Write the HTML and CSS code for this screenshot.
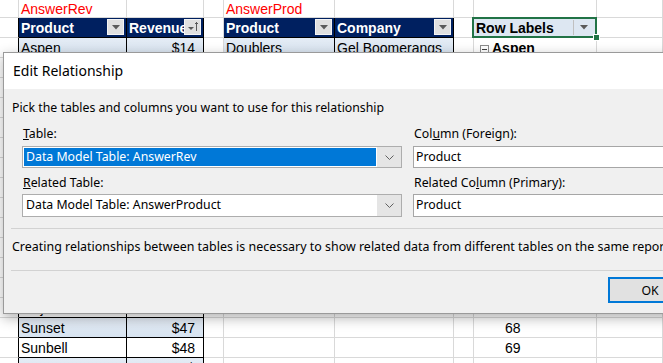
FILE: index.html
```html
<!DOCTYPE html>
<html lang="en">
<head>
    <meta charset="UTF-8">
    <meta name="viewport" content="width=device-width, initial-scale=1.0">
    <title>Edit Relationship</title>
    <link rel="stylesheet" href="styles.css">
</head>
<body>
    <!-- worksheet behind the dialog -->
    <div class="sheet">
        <div class="row title">
            <div class="cell a"></div>
            <div class="cell b red">AnswerRev</div>
            <div class="cell c"></div>
            <div class="cell d"></div>
            <div class="cell e red">AnswerProd</div>
            <div class="cell f"></div>
            <div class="cell g"></div>
            <div class="cell h"></div>
            <div class="cell i"></div>
        </div>
        <div class="row">
            <div class="cell a tbl-edge"></div>
            <div class="cell b head">Product<span class="filter"><svg width="8" height="5"><path d="M0 0 L8 0 L4 4.5 Z" fill="#5a5a5a"/></svg></span></div>
            <div class="cell c head">Revenue<span class="filter"><svg width="12" height="12"><path d="M1 6 L7 6 L4 9 Z" fill="#5a5a5a"/><path d="M9.5 1 V10 M8 2.5 H11" stroke="#5a5a5a" stroke-width="1"/></svg></span></div>
            <div class="cell d"></div>
            <div class="cell e head">Product<span class="filter"><svg width="8" height="5"><path d="M0 0 L8 0 L4 4.5 Z" fill="#5a5a5a"/></svg></span></div>
            <div class="cell f head">Company<span class="filter"><svg width="8" height="5"><path d="M0 0 L8 0 L4 4.5 Z" fill="#5a5a5a"/></svg></span></div>
            <div class="cell g"></div>
            <div class="cell h pivot-head">Row Labels<span class="pivot-filter"><svg width="8" height="5"><path d="M0 0 L8 0 L4 4.5 Z" fill="#5a5a5a"/></svg></span></div>
            <div class="cell i"></div>
        </div>
        <div class="row band">
            <div class="cell a tbl-edge"></div>
            <div class="cell b tbl">Aspen</div>
            <div class="cell c tbl num">$14</div>
            <div class="cell d"></div>
            <div class="cell e tbl">Doublers</div>
            <div class="cell f tbl">Gel Boomerangs</div>
            <div class="cell g"></div>
            <div class="cell h plain bold"><span class="collapse"></span>Aspen</div>
            <div class="cell i"></div>
        </div>
        <div class="row"><div class="cell a tbl-edge"></div><div class="cell b tbl">Bellen</div><div class="cell c tbl num">$15</div><div class="cell d"></div><div class="cell e"></div><div class="cell f"></div><div class="cell g"></div><div class="cell h pnum">56</div><div class="cell i"></div></div>
        <div class="row band"><div class="cell a tbl-edge"></div><div class="cell b tbl">Carlota</div><div class="cell c tbl num">$18</div><div class="cell d"></div><div class="cell e"></div><div class="cell f"></div><div class="cell g"></div><div class="cell h pnum">57</div><div class="cell i"></div></div>
        <div class="row"><div class="cell a tbl-edge"></div><div class="cell b tbl">Crested Beaut</div><div class="cell c tbl num">$21</div><div class="cell d"></div><div class="cell e"></div><div class="cell f"></div><div class="cell g"></div><div class="cell h pnum">58</div><div class="cell i"></div></div>
        <div class="row band"><div class="cell a tbl-edge"></div><div class="cell b tbl">Majestic Beaut</div><div class="cell c tbl num">$24</div><div class="cell d"></div><div class="cell e"></div><div class="cell f"></div><div class="cell g"></div><div class="cell h pnum">59</div><div class="cell i"></div></div>
        <div class="row"><div class="cell a tbl-edge"></div><div class="cell b tbl">Quad</div><div class="cell c tbl num">$27</div><div class="cell d"></div><div class="cell e"></div><div class="cell f"></div><div class="cell g"></div><div class="cell h pnum">60</div><div class="cell i"></div></div>
        <div class="row band"><div class="cell a tbl-edge"></div><div class="cell b tbl">Sunshine</div><div class="cell c tbl num">$30</div><div class="cell d"></div><div class="cell e"></div><div class="cell f"></div><div class="cell g"></div><div class="cell h pnum">61</div><div class="cell i"></div></div>
        <div class="row"><div class="cell a tbl-edge"></div><div class="cell b tbl">Yanaki</div><div class="cell c tbl num">$32</div><div class="cell d"></div><div class="cell e"></div><div class="cell f"></div><div class="cell g"></div><div class="cell h pnum">62</div><div class="cell i"></div></div>
        <div class="row band"><div class="cell a tbl-edge"></div><div class="cell b tbl">Bellen</div><div class="cell c tbl num">$35</div><div class="cell d"></div><div class="cell e"></div><div class="cell f"></div><div class="cell g"></div><div class="cell h pnum">63</div><div class="cell i"></div></div>
        <div class="row"><div class="cell a tbl-edge"></div><div class="cell b tbl">Carlota</div><div class="cell c tbl num">$38</div><div class="cell d"></div><div class="cell e"></div><div class="cell f"></div><div class="cell g"></div><div class="cell h pnum">64</div><div class="cell i"></div></div>
        <div class="row band"><div class="cell a tbl-edge"></div><div class="cell b tbl">Quad</div><div class="cell c tbl num">$40</div><div class="cell d"></div><div class="cell e"></div><div class="cell f"></div><div class="cell g"></div><div class="cell h pnum">65</div><div class="cell i"></div></div>
        <div class="row"><div class="cell a tbl-edge"></div><div class="cell b tbl">Yanaki</div><div class="cell c tbl num">$43</div><div class="cell d"></div><div class="cell e"></div><div class="cell f"></div><div class="cell g"></div><div class="cell h pnum">66</div><div class="cell i"></div></div>
        <div class="row band"><div class="cell a tbl-edge"></div><div class="cell b tbl">Aspen</div><div class="cell c tbl num">$45</div><div class="cell d"></div><div class="cell e"></div><div class="cell f"></div><div class="cell g"></div><div class="cell h pnum"></div><div class="cell i"></div></div>
        <div class="row"><div class="cell a tbl-edge"></div><div class="cell b tbl">Majestic</div><div class="cell c tbl num">$46</div><div class="cell d"></div><div class="cell e"></div><div class="cell f"></div><div class="cell g"></div><div class="cell h pnum">67</div><div class="cell i"></div></div>
        <div class="row band"><div class="cell a tbl-edge"></div><div class="cell b tbl">Sunset</div><div class="cell c tbl num">$47</div><div class="cell d"></div><div class="cell e"></div><div class="cell f"></div><div class="cell g"></div><div class="cell h pnum">68</div><div class="cell i"></div></div>
        <div class="row"><div class="cell a tbl-edge"></div><div class="cell b tbl">Sunbell</div><div class="cell c tbl num">$48</div><div class="cell d"></div><div class="cell e"></div><div class="cell f"></div><div class="cell g"></div><div class="cell h pnum">69</div><div class="cell i"></div></div>
        <div class="row band"><div class="cell a tbl-edge"></div><div class="cell b tbl"></div><div class="cell c tbl num">$</div><div class="cell d"></div><div class="cell e"></div><div class="cell f"></div><div class="cell g"></div><div class="cell h pnum"></div><div class="cell i"></div></div>
    </div>

    <!-- Edit Relationship dialog -->
    <div class="dialog">
        <div class="dialog-title">Edit Relationship</div>
        <div class="dialog-body">
            <div class="group-label">Pick the tables and columns you want to use for this relationship</div>
            <div class="form">
                <div class="field">
                    <label><u>T</u>able:</label>
                    <div class="combo">
                        <div class="combo-value selected">Data Model Table: AnswerRev</div>
                        <div class="combo-btn"><svg width="9" height="5"><path d="M0.5 0.5 L4.5 4.5 L8.5 0.5" stroke="#606060" fill="none"/></svg></div>
                    </div>
                </div>
                <div class="field">
                    <label>Col<u>u</u>mn (Foreign):</label>
                    <div class="textbox">Product</div>
                </div>
                <div class="field">
                    <label><u>R</u>elated Table:</label>
                    <div class="combo tall">
                        <div class="combo-value">Data Model Table: AnswerProduct</div>
                        <div class="combo-btn"><svg width="9" height="5"><path d="M0.5 0.5 L4.5 4.5 L8.5 0.5" stroke="#606060" fill="none"/></svg></div>
                    </div>
                </div>
                <div class="field">
                    <label>Related Co<u>l</u>umn (Primary):</label>
                    <div class="textbox tall">Product</div>
                </div>
            </div>
            <div class="sep"></div>
            <p class="note">Creating relationships between tables is necessary to show related data from different tables on the same report.</p>
            <div class="sep"></div>
            <div class="buttons">
                <button class="btn default">OK</button>
            </div>
        </div>
    </div>
</body>
</html>
```
FILE: styles.css
```css
body {
    margin: 0;
    overflow: hidden;
    background: #fff;
    position: relative;
    height: 363px;
}

/* worksheet */
.sheet {
    font-family: "Liberation Sans", Arial, sans-serif;
    font-size: 14px;
    color: #000;
}

.row {
    display: flex;
    height: 20px;
}

.row.title {
    height: 18px;
}

.cell {
    box-sizing: border-box;
    flex: none;
    position: relative;
    border-right: 1px solid #d9d9d9;
    border-bottom: 1px solid #d9d9d9;
    padding: 0 2px;
    line-height: 20px;
    white-space: nowrap;
    overflow: hidden;
}

.title .cell {
    line-height: 18px;
}

.a { width: 19px; }
.b { width: 108px; }
.c { width: 77px; }
.d { width: 20px; }
.e { width: 111px; }
.f { width: 119px; }
.g { width: 20px; }
.h { width: 123px; overflow: visible; }
.i { flex: 1; }

.red {
    color: #ff0000;
}

.tbl-edge {
    border-right-color: #000;
}

.head {
    background: #002060;
    color: #fff;
    font-weight: bold;
    border-right-color: #000;
    border-bottom-color: #000;
}

.filter {
    position: absolute;
    top: 1px;
    right: 2px;
    width: 17px;
    height: 16px;
    background: #e0e0e0;
    border: 1px solid #f4f4f4;
    box-sizing: border-box;
    display: flex;
    align-items: center;
    justify-content: center;
}

.tbl {
    border-right-color: #000;
    border-bottom-color: #000;
}

.band .tbl {
    background: linear-gradient(#e4ecf5, #d7e3f0);
}

.num {
    text-align: right;
    padding-right: 8px;
}

.pivot-head {
    background: #dde7f2;
    font-weight: bold;
}

.pivot-head::after {
    content: "";
    position: absolute;
    top: -1px;
    left: -2px;
    right: -1px;
    bottom: -1px;
    border: 2px solid #217346;
}

.pivot-head::before {
    content: "";
    position: absolute;
    right: -4px;
    bottom: -4px;
    width: 5px;
    height: 5px;
    background: #217346;
    border: 1px solid #fff;
    z-index: 1;
}

.pivot-filter {
    position: absolute;
    top: 2px;
    right: 3px;
    width: 19px;
    height: 15px;
    border-left: 1px solid #c0c0c0;
    display: flex;
    align-items: center;
    justify-content: center;
}

.bold {
    font-weight: bold;
}

.collapse {
    display: inline-block;
    width: 9px;
    height: 9px;
    margin: 0 3px 0 4px;
    border: 1px solid #8c8c8c;
    box-sizing: border-box;
    position: relative;
    vertical-align: -1px;
}

.collapse::after {
    content: "";
    position: absolute;
    left: 1px;
    right: 1px;
    top: 3px;
    height: 1px;
    background: #404040;
}

.pnum {
    padding-left: 31px;
}

/* dialog */
.dialog {
    position: absolute;
    left: 3px;
    top: 52px;
    width: 720px;
    height: 262px;
    box-sizing: border-box;
    border: 1px solid #9a9a9a;
    background: #f0f0f0;
    box-shadow: 0 4px 12px rgba(0, 0, 0, 0.3);
    font-family: "Noto Sans", "Open Sans", sans-serif;
    font-size: 12.3px;
    color: #000;
}

.dialog-title {
    height: 36px;
    line-height: 36px;
    background: #fff;
    padding-left: 9px;
    font-size: 14px;
}

.dialog-body {
    padding: 11px 0 0 0;
}

.group-label {
    padding-left: 8px;
    line-height: 16px;
}

.form {
    display: grid;
    grid-template-columns: 380px 300px;
    column-gap: 11px;
    row-gap: 7px;
    padding: 10px 0 0 18px;
}

.field label {
    display: block;
    line-height: 16px;
    padding-left: 1px;
    margin-bottom: 4px;
}

.field:nth-child(n+3) label {
    margin-bottom: 3px;
}

.combo {
    display: flex;
    height: 22px;
    box-sizing: border-box;
    border: 1px solid #adadad;
    background: #fff;
}

.combo.tall,
.textbox.tall {
    height: 23px;
}

.combo-value {
    flex: 1;
    margin: 1px;
    padding-left: 2px;
    line-height: 18px;
}

.combo-value.selected {
    background: #0078d7;
    color: #fff;
}

.combo-btn {
    width: 24px;
    background: #e5e5e5;
    display: flex;
    align-items: center;
    justify-content: center;
}

.textbox {
    height: 22px;
    box-sizing: border-box;
    border: 1px solid #a6a6a6;
    background: #fff;
    padding-left: 2px;
    line-height: 20px;
}

.sep {
    height: 1px;
    background: #d2d2d2;
    margin: 11px 0 0 7px;
}

.note {
    margin: 10px 0 0 8px;
    line-height: 16px;
    font-size: 12.45px;
    white-space: nowrap;
}

.note + .sep {
    margin-top: 15px;
}

.buttons {
    display: flex;
    padding: 6px 0 0 604px;
}

.btn {
    width: 84px;
    height: 26px;
    font-family: inherit;
    font-size: 12.3px;
    background: #e1e1e1;
    border: 1px solid #adadad;
    padding: 0;
}

.btn.default {
    border: 2px solid #0078d7;
}
```
